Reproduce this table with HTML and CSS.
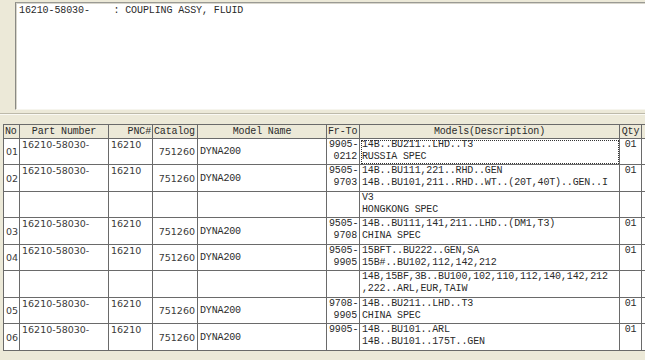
FILE: index.html
```html
<!DOCTYPE html>
<html>
<head>
<meta charset="utf-8">
<link rel="stylesheet" href="styles.css">
</head>
<body>
<div class="memo">16210-58030-    : COUPLING ASSY, FLUID</div>
<div class="sep"></div>
<table class="grid">
  <colgroup>
    <col class="c-no"><col class="c-part"><col class="c-pnc"><col class="c-cat"><col class="c-model"><col class="c-frto"><col class="c-desc"><col class="c-qty"><col class="c-extra">
  </colgroup>
  <tr class="head">
    <th class="mono left">No</th>
    <th class="mono center">Part Number</th>
    <th class="mono right">PNC#</th>
    <th class="mono left">Catalog</th>
    <th class="mono center">Model Name</th>
    <th class="mono left">Fr-To</th>
    <th class="mono center">Models(Description)</th>
    <th class="mono center">Qty</th>
    <th class="extra"></th>
  </tr>
  <tr class="r26">
    <td class="no">01</td><td class="part">16210-58030-</td><td class="pnc">16210</td><td class="cat">751260</td><td class="model">DYNA200</td>
    <td class="frto">9905-<br>0212</td><td class="desc focus">14B..BU211..LHD..T3<br>RUSSIA SPEC</td><td class="qty">01</td><td class="extra"></td>
  </tr>
  <tr class="r27">
    <td class="no">02</td><td class="part">16210-58030-</td><td class="pnc">16210</td><td class="cat">751260</td><td class="model">DYNA200</td>
    <td class="frto">9505-<br>9703</td><td class="desc">14B..BU111,221..RHD..GEN<br>14B..BU101,211..RHD..WT..(20T,40T)..GEN..I</td><td class="qty">01</td><td class="extra"></td>
  </tr>
  <tr class="r26">
    <td class="no"></td><td class="part"></td><td class="pnc"></td><td class="cat"></td><td class="model"></td>
    <td class="frto"></td><td class="desc">V3<br>HONGKONG SPEC</td><td class="qty"></td><td class="extra"></td>
  </tr>
  <tr class="r27">
    <td class="no">03</td><td class="part">16210-58030-</td><td class="pnc">16210</td><td class="cat">751260</td><td class="model">DYNA200</td>
    <td class="frto">9505-<br>9708</td><td class="desc">14B..BU111,141,211..LHD..(DM1,T3)<br>CHINA SPEC</td><td class="qty">01</td><td class="extra"></td>
  </tr>
  <tr class="r26">
    <td class="no">04</td><td class="part">16210-58030-</td><td class="pnc">16210</td><td class="cat">751260</td><td class="model">DYNA200</td>
    <td class="frto">9505-<br>9905</td><td class="desc">15BFT..BU222..GEN,SA<br>15B#..BU102,112,142,212</td><td class="qty">01</td><td class="extra"></td>
  </tr>
  <tr class="r27">
    <td class="no"></td><td class="part"></td><td class="pnc"></td><td class="cat"></td><td class="model"></td>
    <td class="frto"></td><td class="desc">14B,15BF,3B..BU100,102,110,112,140,142,212<br>,222..ARL,EUR,TAIW</td><td class="qty"></td><td class="extra"></td>
  </tr>
  <tr class="r26">
    <td class="no">05</td><td class="part">16210-58030-</td><td class="pnc">16210</td><td class="cat">751260</td><td class="model">DYNA200</td>
    <td class="frto">9708-<br>9905</td><td class="desc">14B..BU211..LHD..T3<br>CHINA SPEC</td><td class="qty">01</td><td class="extra"></td>
  </tr>
  <tr class="r27">
    <td class="no">06</td><td class="part">16210-58030-</td><td class="pnc">16210</td><td class="cat">751260</td><td class="model">DYNA200</td>
    <td class="frto">9905-</td><td class="desc">14B..BU101..ARL<br>14B..BU101..175T..GEN</td><td class="qty">01</td><td class="extra"></td>
  </tr>
</table>
</body>
</html>
```

FILE: styles.css
```css
html, body {
  margin: 0;
  padding: 0;
  background: #ece9d8;
  overflow: hidden;
  width: 645px;
  height: 360px;
}

body {
  font-family: "Liberation Mono", monospace;
  font-size: 10px;
  letter-spacing: -0.15px;
  color: #2a2a2a;
}

.memo {
  margin: 2px 0 0 15px;
  width: 650px;
  height: 104px;
  background: #fff;
  border-top: 1px solid #9a9a94;
  border-left: 1px solid #8a8a84;
  border-bottom: 1px solid #f6f5ee;
  box-shadow: inset 1px 1px 0 #d8d6cc;
  padding: 2px 0 0 3px;
  white-space: pre;
  font-family: "Liberation Mono", monospace;
  font-size: 10px;
  letter-spacing: -0.1px;
  line-height: 12px;
  color: #2a2a2a;
}

.sep {
  margin-top: 3px;
  height: 0;
  border-top: 1px solid #bdbaaa;
  border-bottom: 1px solid #faf9f3;
}

.grid {
  margin: 9px 0 0 3px;
  border-collapse: separate;
  border-spacing: 0;
  table-layout: fixed;
  width: 659px;
  border-top: 1px solid #6a6a6a;
  border-left: 1px solid #6a6a6a;
}

.c-no { width: 16px; }
.c-part { width: 89px; }
.c-pnc { width: 44px; }
.c-cat { width: 45px; }
.c-model { width: 129px; }
.c-frto { width: 33px; }
.c-desc { width: 260px; }
.c-qty { width: 22px; }
.c-extra { width: 20px; }

.grid th, .grid td {
  border-right: 1px solid #6a6a6a;
  border-bottom: 1px solid #6a6a6a;
  padding: 0 2px;
  overflow: hidden;
  white-space: nowrap;
  box-sizing: border-box;
}

.grid th {
  background: #ece9d8;
  font-weight: normal;
  height: 14px;
  line-height: 12px;
  padding: 0 1px;
  color: #2a2a2a;
}

.grid td {
  background: #fff;
}

.head { height: 14px; }
.r26 { height: 26px; }
.r27 { height: 27px; }

.mono {
  font-family: "Liberation Mono", monospace;
  font-size: 10px;
}

.left { text-align: left; }
.center { text-align: center; }
.right { text-align: right; }

.grid th.extra { background: #ece9d8; }

.no, .part, .pnc, .cat {
  font-family: "DejaVu Sans", sans-serif;
  font-size: 9.5px;
  letter-spacing: 0;
  color: #3a3a3a;
}

.no {
  vertical-align: middle;
  padding: 5px 0 0 1px;
}

.part, .pnc {
  vertical-align: top;
  padding: 2px 3px 0;
  line-height: 12px;
}

.part { padding-left: 4px; }

.cat {
  vertical-align: middle;
  text-align: right;
  padding: 4px 2px 0 0;
}

.model {
  vertical-align: middle;
  padding: 4px 0 0 3px;
}

.frto {
  vertical-align: top;
  text-align: right;
  padding: 1px 0 0 0;
  line-height: 12px;
}

.desc {
  vertical-align: top;
  padding: 1px 0 0 2px;
  line-height: 12px;
}

.focus {
  outline: 1px dotted #333;
  outline-offset: -2px;
}

.qty {
  vertical-align: top;
  text-align: center;
  padding: 2px 0 0;
  line-height: 12px;
}
```
